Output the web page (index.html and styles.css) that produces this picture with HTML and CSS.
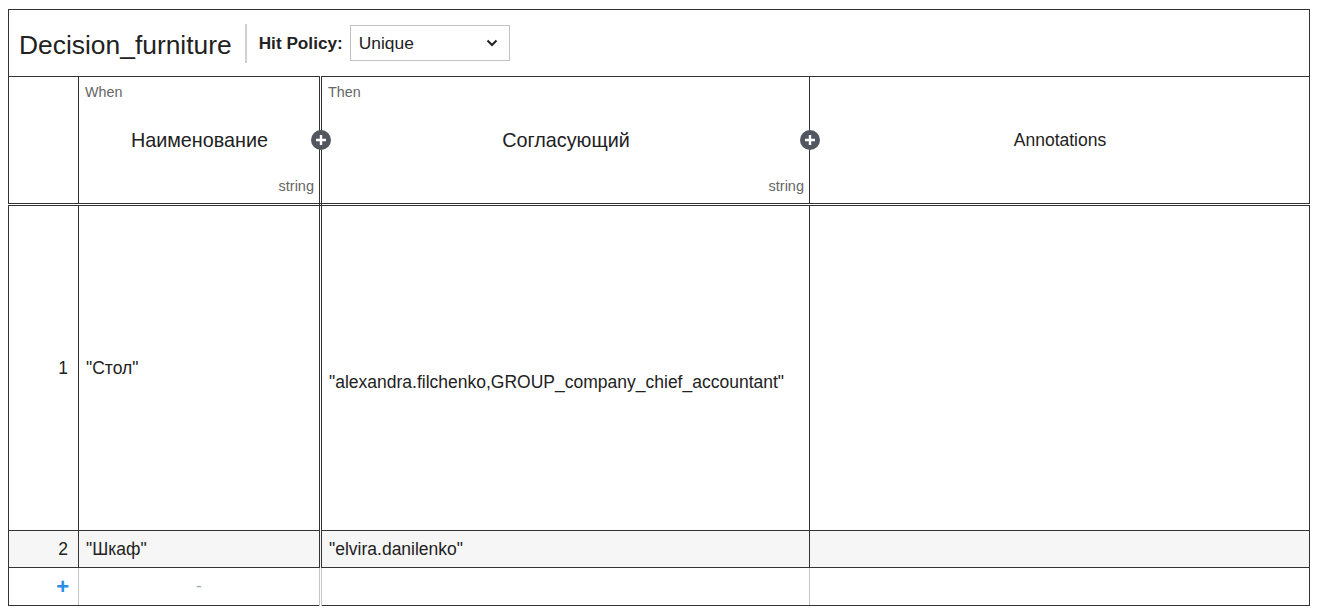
FILE: index.html
```html
<!DOCTYPE html>
<html>
<head>
<meta charset="utf-8">
<link rel="stylesheet" href="styles.css">
</head>
<body>
<div class="dt">
  <div class="dt-head">
    <div class="dt-name">Decision_furniture</div>
    <div class="dt-sep"></div>
    <span class="hp-label">Hit Policy:</span>
    <div class="hp-select">
      <span>Unique</span>
      <svg class="chev" width="12" height="8" viewBox="0 0 12 8"><path d="M1.5 1.5 L6 6 L10.5 1.5" fill="none" stroke="#222" stroke-width="2"/></svg>
    </div>
  </div>
  <table class="tbl">
    <colgroup>
      <col class="c-idx"><col class="c-in"><col class="c-out"><col class="c-ann">
    </colgroup>
    <thead>
      <tr class="hrow">
        <th class="idx"></th>
        <th class="hc in-last">
          <div class="hcell">
            <span class="clause">When</span>
            <span class="cname">Наименование</span>
            <span class="ctype">string</span>
          </div>
          <svg class="add" width="20" height="20" viewBox="0 0 20 20"><circle cx="10" cy="10" r="10" fill="#52565e"/><path d="M10 5 V15 M5 10 H15" stroke="#fff" stroke-width="2.4"/></svg>
        </th>
        <th class="hc">
          <div class="hcell">
            <span class="clause">Then</span>
            <span class="cname">Согласующий</span>
            <span class="ctype">string</span>
          </div>
          <svg class="add" width="20" height="20" viewBox="0 0 20 20"><circle cx="10" cy="10" r="10" fill="#52565e"/><path d="M10 5 V15 M5 10 H15" stroke="#fff" stroke-width="2.4"/></svg>
        </th>
        <th class="hc">
          <div class="hcell">
            <span class="clause"></span>
            <span class="cname ann">Annotations</span>
            <span class="ctype"></span>
          </div>
        </th>
      </tr>
    </thead>
    <tbody>
      <tr class="r1">
        <td class="idx">1</td>
        <td class="in-last">"Стол"</td>
        <td class="low">"alexandra.filchenko,GROUP_company_chief_accountant"</td>
        <td></td>
      </tr>
      <tr class="r2">
        <td class="idx">2</td>
        <td class="in-last">"Шкаф"</td>
        <td>"elvira.danilenko"</td>
        <td></td>
      </tr>
      <tr class="radd">
        <td class="idx plus">+</td>
        <td class="in-last dash">-</td>
        <td></td>
        <td></td>
      </tr>
    </tbody>
  </table>
</div>
</body>
</html>
```

FILE: styles.css
```css
html, body {
  margin: 0;
  padding: 0;
  background: #fff;
}
body {
  padding: 9px 0 0 8px;
  font-family: "Liberation Sans", Arial, sans-serif;
  color: #222;
}
.dt {
  width: 1302px;
}
.dt-head {
  box-sizing: border-box;
  height: 67px;
  border: 1px solid #333;
  border-bottom: none;
  display: flex;
  align-items: center;
  padding-left: 10px;
}
.dt-name {
  font-size: 26.4px;
  line-height: 30px;
  margin-top: 4px;
}
.dt-sep {
  width: 2px;
  height: 39px;
  background: #cfcfd4;
  margin: 0 12px 0 13px;
}
.hp-label {
  font-weight: bold;
  font-size: 17.2px;
  margin-right: 7px;
}
.hp-select {
  box-sizing: border-box;
  width: 160px;
  height: 36px;
  border: 1px solid #c3c3c3;
  display: flex;
  align-items: center;
  justify-content: space-between;
  padding: 0 11px 0 8px;
  font-size: 17.4px;
}
.chev {
  display: block;
}
.tbl {
  border-collapse: collapse;
  table-layout: fixed;
  width: 1302px;
  font-size: 17.5px;
}
.c-idx { width: 70px; }
.c-in { width: 242px; }
.c-out { width: 489px; }
.c-ann { width: 500px; }
.tbl th, .tbl td {
  border: 1px solid #333;
  padding: 0 7px;
  text-align: left;
  font-weight: normal;
  vertical-align: middle;
}
.tbl .in-last {
  border-right: 3px double #333;
}
.hrow th {
  border-bottom: 3px double #333;
  height: 126px;
  padding: 0;
  position: relative;
  vertical-align: top;
}
.hcell {
  box-sizing: border-box;
  height: 126px;
  display: flex;
  flex-direction: column;
  padding: 6px 5px 7px 6px;
}
.clause {
  font-size: 14.3px;
  color: #666;
  height: 18px;
  line-height: 18px;
}
.cname {
  flex: 1;
  display: flex;
  align-items: center;
  justify-content: center;
  font-size: 19.8px;
  padding-top: 2px;
}
.cname.ann {
  font-size: 17.5px;
}
.ctype {
  font-size: 14.5px;
  color: #666;
  text-align: right;
  height: 18px;
  line-height: 16px;
}
.add {
  position: absolute;
  right: -11px;
  top: 53px;
  z-index: 2;
}
.in-last .add {
  right: -12px;
}
.r1 td {
  height: 324px;
}
.r1 td.low {
  padding-top: 28px;
  height: 296px;
}
.r2 td {
  height: 36px;
  background: #f6f6f6;
}
.tbl td.idx {
  text-align: right;
  padding-right: 10px;
}
.radd td {
  height: 37px;
  border-left-color: #c4c4cc;
  border-right-color: #c4c4cc;
}
.radd td.in-last {
  border-right: 3px double #c4c4cc;
}
.radd td.idx {
  border-left-color: #333;
}
.radd td:last-child {
  border-right-color: #333;
}
.tbl td.plus {
  color: #2b8be8;
  font-size: 22px;
  font-weight: bold;
  padding-right: 9px;
}
.tbl td.dash {
  text-align: center;
  color: #aaa;
}
```
